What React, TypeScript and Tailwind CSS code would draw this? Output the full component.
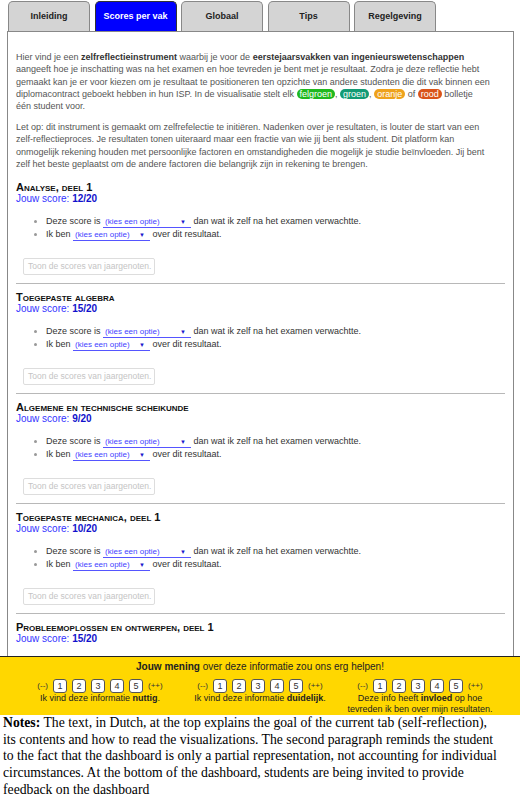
import React from 'react';

const tabs = ['Inleiding', 'Scores per vak', 'Globaal', 'Tips', 'Regelgeving'];

// last course is only partly visible above the feedback bar
const courses = [
  { name: 'Analyse, deel 1', score: '12/20', full: true },
  { name: 'Toegepaste algebra', score: '15/20', full: true },
  { name: 'Algemene en technische scheikunde', score: '9/20', full: true },
  { name: 'Toegepaste mechanica, deel 1', score: '10/20', full: true },
  { name: 'Probleemoplossen en ontwerpen, deel 1', score: '15/20', full: false },
];

const OptionSelect: React.FC<{ className: string }> = ({ className }) => (
  <span
    className={`inline-flex items-center justify-between border-b border-[#5555ff] pl-[2px] pr-[5px] text-[8px] leading-[10px] text-[#3f3fff] align-baseline ${className}`}
  >
    <span>(kies een optie)</span>
    <span className="text-[6px] text-[#1a1acc]">▼</span>
  </span>
);

const Pill: React.FC<{ color: string; children: React.ReactNode }> = ({ color, children }) => (
  <span className={`rounded-full px-[3px] text-white ${color}`}>{children}</span>
);

const Rating: React.FC<{ children: React.ReactNode }> = ({ children }) => (
  <div className="flex flex-col items-center">
    <div className="flex items-center gap-[5px]">
      <span className="text-[8px] text-[#333]">(--)</span>
      {[1, 2, 3, 4, 5].map((n) => (
        <span
          key={n}
          className="flex h-[14px] w-[14px] items-center justify-center rounded-[3px] border border-[#555] bg-white text-[9px] leading-none text-[#333]"
        >
          {n}
        </span>
      ))}
      <span className="text-[8px] text-[#333]">(++)</span>
    </div>
    <div className="whitespace-nowrap text-center text-[9px] leading-[11px] text-[#222]">{children}</div>
  </div>
);

export default function App() {
  return (
    <div className="w-[520px] bg-white font-['Liberation_Sans',Arial,sans-serif]">
      {/* tabs */}
      <div className="flex gap-[4.5px] pl-[8px] pt-[1px]">
        {tabs.map((t) => {
          const active = t === 'Scores per vak';
          return (
            <div
              key={t}
              className={`flex h-[30px] w-[82px] items-center justify-center rounded-t-[5px] border border-b-0 text-[9px] font-bold ${
                active ? 'border-[#333] bg-[#0000ff] text-white' : 'border-[#888] bg-[#d4d4d4] text-[#222]'
              }`}
            >
              {t}
            </div>
          );
        })}
      </div>

      {/* panel */}
      <div className="ml-[7px] h-[625px] w-[507px] overflow-hidden border border-b-0 border-[#888] px-[8px] pt-[19px]">
        <p className="whitespace-nowrap text-[9px] leading-[12.3px] text-[#555]">
          Hier vind je een <b className="text-[#333]">zelfreflectieinstrument</b> waarbij je voor de{' '}
          <b className="text-[#333]">eerstejaarsvakken van ingenieurswetenschappen</b>
          <br />
          aangeeft hoe je inschatting was na het examen en hoe tevreden je bent met je resultaat. Zodra je deze reflectie hebt
          <br />
          gemaakt kan je er voor kiezen om je resultaat te positioneren ten opzichte van andere studenten die dit vak binnen een
          <br />
          diplomacontract geboekt hebben in hun ISP. In de visualisatie stelt elk <Pill color="bg-[#1fb81f]">felgroen</Pill>,{' '}
          <Pill color="bg-[#139a74]">groen</Pill>, <Pill color="bg-[#eea21c]">oranje</Pill> of{' '}
          <Pill color="bg-[#d9531a]">rood</Pill> bolletje
          <br />
          één student voor.
        </p>
        <p className="mt-[8.5px] whitespace-nowrap text-[9px] leading-[12.3px] text-[#555]">
          Let op: dit instrument is gemaakt om zelfrefelectie te initiëren. Nadenken over je resultaten, is louter de start van een
          <br />
          zelf-reflectieproces. Je resultaten tonen uiteraard maar een fractie van wie jij bent als student. Dit platform kan
          <br />
          onmogelijk rekening houden met persoonlijke factoren en omstandigheden die mogelijk je studie beïnvloeden. Jij bent
          <br />
          zelf het beste geplaatst om de andere factoren die belangrijk zijn in rekening te brengen.
        </p>

        <div className="mt-[11px] flex flex-col">
          {courses.map((c, i) => (
            <section key={c.name} className={i > 0 ? 'mt-[7px]' : ''}>
              <h3 className="text-[11px] font-bold leading-[12px] text-[#111] [font-variant-caps:small-caps]">{c.name}</h3>
              <p className="text-[10px] leading-[12px] text-[#3333ff]">
                Jouw score: <b className="text-[#1111cc]">{c.score}</b>
              </p>
              {c.full && (
                <>
                  <ul className="mt-[9.5px] list-disc whitespace-nowrap pl-[30px] text-[9px] leading-[13px] text-[#333] marker:text-[#999]">
                    <li>
                      Deze score is <OptionSelect className="w-[88px]" /> dan wat ik zelf na het examen verwachtte.
                    </li>
                    <li>
                      Ik ben <OptionSelect className="w-[77px]" /> over dit resultaat.
                    </li>
                  </ul>
                  <button className="ml-[7px] mt-[17.5px] block h-[17px] w-[132px] whitespace-nowrap rounded-[2px] border border-[#ddd] bg-white px-[4px] text-left text-[8.5px] leading-[15px] text-[#c4c4c4]">
                    Toon de scores van jaargenoten.
                  </button>
                  <div className="mt-[8px] border-t border-[#b8b8b8]" />
                </>
              )}
            </section>
          ))}
        </div>
      </div>

      {/* feedback bar */}
      <div className="border-t border-[#222] bg-[#ffd700] pt-[4px]">
        <p className="text-center text-[10px] leading-[12px] text-[#222]">
          <b>Jouw mening</b> over deze informatie zou ons erg helpen!
        </p>
        <div className="mx-auto mt-[6px] grid h-[36px] w-[480px] grid-cols-3">
          <Rating>
            Ik vind deze informatie <b>nuttig</b>.
          </Rating>
          <Rating>
            Ik vind deze informatie <b>duidelijk</b>.
          </Rating>
          <Rating>
            Deze info heeft <b>invloed</b> op hoe
            <br />
            tevreden ik ben over mijn resultaten.
          </Rating>
        </div>
      </div>

      {/* caption */}
      <p className="whitespace-nowrap pl-[3px] font-['Liberation_Serif','Times_New_Roman',serif] text-[13.7px] leading-[16.7px] text-black">
        <b>Notes:</b> The text, in Dutch, at the top explains the goal of the current tab (self-reflection),
        <br />
        its contents and how to read the visualizations. The second paragraph reminds the student
        <br />
        to the fact that the dashboard is only a partial representation, not accounting for individual
        <br />
        circumstances. At the bottom of the dashboard, students are being invited to provide
        <br />
        feedback on the dashboard
      </p>
    </div>
  );
}
